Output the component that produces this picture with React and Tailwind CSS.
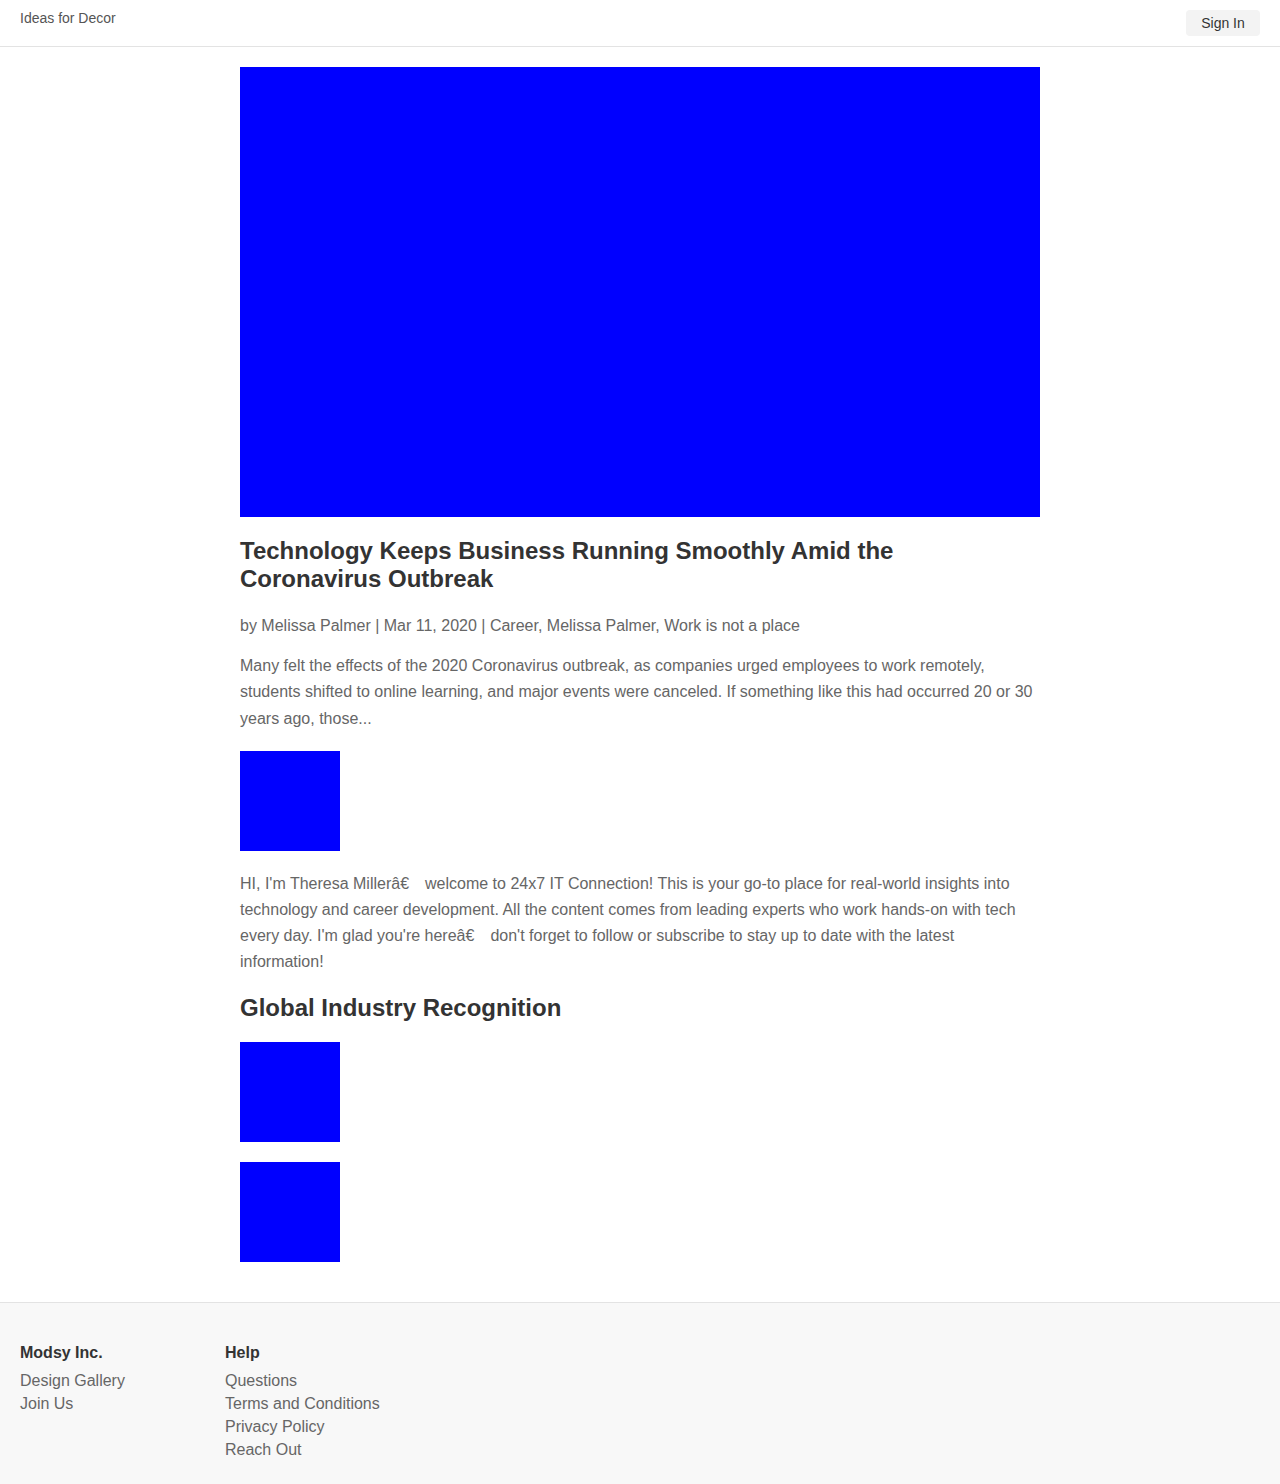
import React from 'react';

const Block = ({ className = '' }) => <div className={`bg-[#0000ff] ${className}`}></div>;

const FooterCol = ({ title, links, className = '' }) => (
  <div className={className}>
    <h4 className="text-base font-bold leading-5 text-[#333]">{title}</h4>
    <ul className="mt-1.5 text-base leading-[23px] text-[#666]">
      {links.map((l) => (
        <li key={l}>{l}</li>
      ))}
    </ul>
  </div>
);

export default function App() {
  return (
    <div className="min-h-screen bg-white font-['Liberation_Sans',Arial,sans-serif]">
      <header className="flex h-[47px] items-start justify-between border-b border-[#e3e3e3] px-5">
        <a className="mt-[10px] text-sm leading-4 text-[#555]">Ideas for Decor</a>
        <button className="mt-[10px] h-[26px] w-[74px] rounded bg-[#f3f3f3] text-sm text-[#333]">Sign In</button>
      </header>

      <main className="mx-auto w-[800px] pt-5 pb-10">
        <Block className="h-[450px] w-full" />

        <h1 className="mt-5 text-2xl font-bold leading-7 text-[#333]">
          Technology Keeps Business Running Smoothly Amid the Coronavirus Outbreak
        </h1>
        <p className="mt-5 text-base leading-[26px] text-[#666]">
          by Melissa Palmer | Mar 11, 2020 | Career, Melissa Palmer, Work is not a place
        </p>
        <p className="mt-[14px] text-base leading-[26.4px] text-[#666]">
          Many felt the effects of the 2020 Coronavirus outbreak, as companies urged employees to work remotely,
          students shifted to online learning, and major events were canceled. If something like this had occurred 20 or 30
          years ago, those...
        </p>

        <Block className="mt-[19px] h-[100px] w-[100px]" />

        <p className="mt-5 text-base leading-[26px] text-[#666]">
          HI, I'm Theresa Millerâ€{'\u2003'}welcome to 24x7 IT Connection! This is your go-to place for real-world insights into
          technology and career development. All the content comes from leading experts who work hands-on with tech
          every day. I'm glad you're hereâ€{'\u2003'}don't forget to follow or subscribe to stay up to date with the latest
          information!
        </p>

        <h2 className="mt-[19px] text-2xl font-bold leading-7 text-[#333]">Global Industry Recognition</h2>

        <Block className="mt-5 h-[100px] w-[100px]" />
        <Block className="mt-5 h-[100px] w-[100px]" />
      </main>

      <footer className="flex border-t border-[#e3e3e3] bg-[#f8f8f8] px-5 pt-10 pb-6">
        <FooterCol className="w-[205px]" title="Modsy Inc." links={['Design Gallery', 'Join Us']} />
        <FooterCol
          title="Help"
          links={['Questions', 'Terms and Conditions', 'Privacy Policy', 'Reach Out']}
        />
      </footer>
    </div>
  );
}
